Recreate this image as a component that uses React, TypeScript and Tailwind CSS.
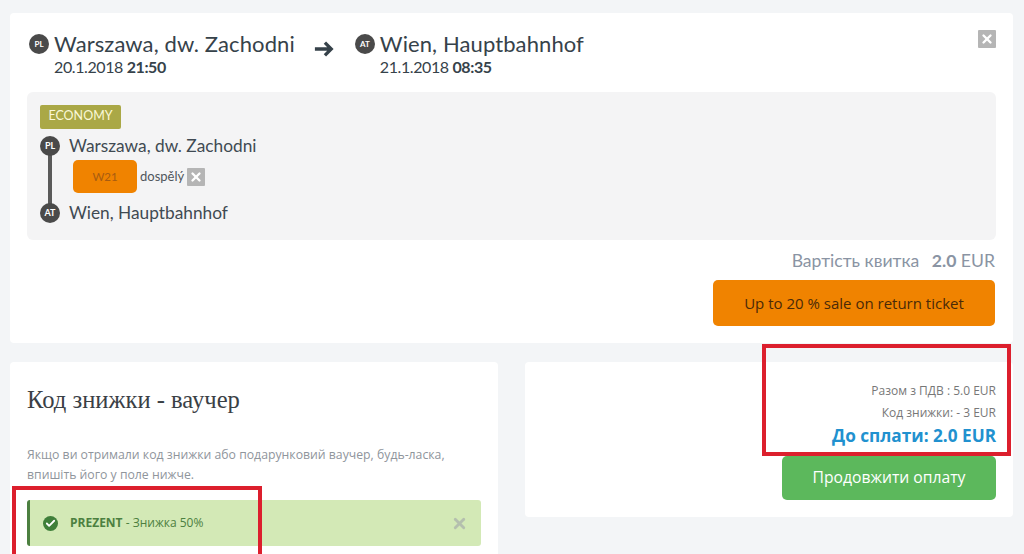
import { Check, X } from "lucide-react";

function Flag({ code, size = "w-5 h-5 text-[8px]" }: { code: string; size?: string }) {
  return (
    <span className={`${size} flex shrink-0 items-center justify-center rounded-full bg-[#4a4a4a] font-bold text-white font-['Lato',sans-serif]`}>
      {code}
    </span>
  );
}

function Remove({ className = "" }: { className?: string }) {
  return (
    <span className={`flex h-[18px] w-[18px] items-center justify-center rounded-[1px] bg-[#b5b5b5] ${className}`}>
      <X size={14} strokeWidth={4} className="text-white" />
    </span>
  );
}

function Stop({ code, name }: { code: string; name: string }) {
  return (
    <div className="relative z-10 flex h-5 items-center gap-[9px]">
      <Flag code={code} size="w-5 h-5 text-[9px]" />
      <span className="text-[17.3px] leading-5 text-[#3f4a52]">{name}</span>
    </div>
  );
}

function Place({ code, name, date, time }: { code: string; name: string; date: string; time: string }) {
  return (
    <div>
      <div className="flex items-center gap-[5px]">
        <Flag code={code} />
        <span className="text-[22px] leading-[24px] tracking-[0.1px] text-[#36424a]">{name}</span>
      </div>
      <div className="mt-[1px] ml-[25px] text-[16px] leading-[20px] tracking-[-0.4px] text-[#36424a]">
        {date} <b>{time}</b>
      </div>
    </div>
  );
}

export default function App() {
  return (
    <div className="relative h-[554px] w-[1024px] overflow-hidden bg-[#f3f5f7] pt-[13px] pl-[10px] font-['Lato',sans-serif]">
      <section className="relative h-[330px] w-[1003px] rounded-[4px] bg-white px-[17px] pt-[19px]">
        <Remove className="absolute top-[17px] right-[17px]" />
        <div className="flex items-start pl-[2px]">
          <Place code="PL" name="Warszawa, dw. Zachodni" date="20.1.2018" time="21:50" />
          <svg viewBox="0 0 22 18" className="mt-2 mr-[21px] ml-[19px] h-[18px] w-[20px]" fill="none" stroke="#36424a" strokeWidth="3.6">
            <path d="M1 9h18M12 2l7 7-7 7" />
          </svg>
          <Place code="AT" name="Wien, Hauptbahnhof" date="21.1.2018" time="08:35" />
        </div>
        <div className="mt-[15px] h-[148px] rounded-[6px] bg-[#f4f4f5] px-[13px] pt-[13px]">
          <span className="flex h-6 w-[81px] items-center justify-center rounded-[2px] bg-[#aaa846] pb-[1px] text-[12.5px] text-[#fbf8d8]">ECONOMY</span>
          <div className="relative mt-[7px]">
            <span className="absolute top-4 left-[8px] h-[58px] w-1 bg-[#5a5a5a]" />
            <Stop code="PL" name="Warszawa, dw. Zachodni" />
            <div className="mt-1 ml-[33px] flex h-[33px] items-center gap-[3px]">
              <span className="flex h-[33px] w-[64px] items-center justify-center rounded-[5px] bg-[#f08300] text-[11.5px] text-[#a85c10]">W21</span>
              <span className="text-[13px] text-[#50565c]">dospělý</span>
              <Remove />
            </div>
            <div className="mt-[10px]">
              <Stop code="AT" name="Wien, Hauptbahnhof" />
            </div>
          </div>
        </div>
        <div className="mt-[9px] pr-[1px] text-right text-[17.6px] leading-6 text-[#8a94a3]">
          Вартість квитка <b className="ml-2">2.0</b> EUR
        </div>
        <div className="mt-[7px] flex justify-end pr-[1px]">
          <button className="h-[46px] w-[282px] rounded-[5px] bg-[#f08300] font-['Open_Sans',sans-serif] text-[15px] text-[#4a2a08]">
            Up to 20 % sale on return ticket
          </button>
        </div>
      </section>

      <div className="mt-[19px] flex items-start gap-[27px]">
        <section className="h-[300px] w-[488px] rounded-[4px] bg-white px-[17px] pt-[21px] font-['Open_Sans',sans-serif]">
          <h2 className="font-['Liberation_Serif',serif] text-[24.6px] leading-[34px] text-[#3a4045]">Код знижки - ваучер</h2>
          <p className="mt-[28px] text-[12.25px] leading-[20px] text-[#8f959c]">
            Якщо ви отримали код знижки або подарунковий ваучер, будь-ласка, впишіть його у поле нижче.
          </p>
          <div className="mt-[15px] flex h-[46px] items-center rounded-[3px] border-l-[3px] border-[#4c8040] bg-[#d3e9b6] pr-[13px] pl-[13px] text-[12px] text-[#4c8040]">
            <span className="flex h-[15px] w-[15px] items-center justify-center rounded-full bg-[#3f7f3a]">
              <Check size={11} strokeWidth={4} className="text-white" />
            </span>
            <span className="ml-[12px]">
              <b>PREZENT</b> - Знижка 50%
            </span>
            <X size={17} strokeWidth={4} className="ml-auto text-[#b4bfae]" />
          </div>
        </section>
        <section className="h-[155px] w-[488px] rounded-[4px] bg-white pt-[18px] pr-[17px] text-right font-['Open_Sans',sans-serif]">
          <div className="text-[12px] leading-[22px] text-[#777]">Разом з ПДВ : 5.0 EUR</div>
          <div className="text-[12px] leading-[22px] text-[#777]">Код знижки: - 3 EUR</div>
          <div className="text-[17.2px] leading-[24px] font-bold text-[#2191cf]">До сплати: 2.0 EUR</div>
          <div className="mt-2 flex justify-end">
            <button className="h-[44px] w-[214px] rounded-[5px] bg-[#5cb85c] text-[15.7px] text-white">Продовжити оплату</button>
          </div>
        </section>
      </div>

      <div className="absolute top-[344px] left-[762px] h-[112px] w-[249px] border-[4px] border-[#dc1f2d]" />
      <div className="absolute top-[486px] left-[12px] h-[80px] w-[250px] border-[4px] border-[#dc1f2d]" />
    </div>
  );
}
